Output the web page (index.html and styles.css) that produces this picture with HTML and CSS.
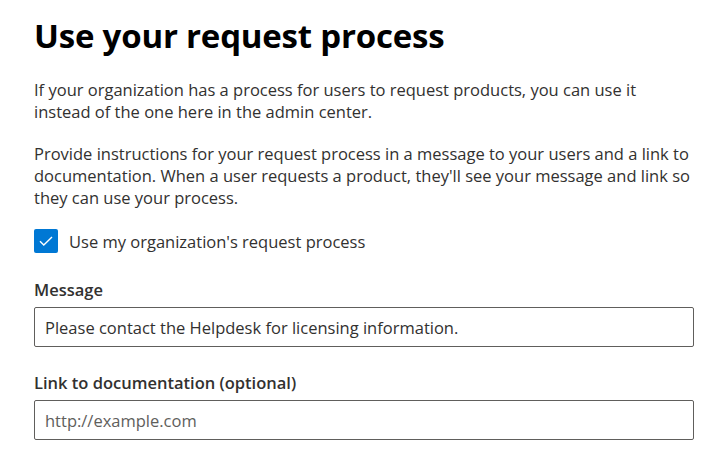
FILE: index.html
```html
<!DOCTYPE html>
<html lang="en">
<head>
  <meta charset="UTF-8" />
  <title>Use your request process</title>
  <link rel="stylesheet" href="styles.css">
</head>
<body>

<div class="panel">
  <h1>Use your request process</h1>
  <p class="desc">If your organization has a process for users to request products, you can use it instead of the one here in the admin center.</p>
  <p class="desc">Provide instructions for your request process in a message to your users and a link to documentation. When a user requests a product, they'll see your message and link so they can use your process.</p>

  <label class="check">
    <span class="box">
      <svg width="14" height="10" viewBox="0 0 14 10"><path d="M1 5.2 L4.8 9 L13 1" fill="none" stroke="#fff" stroke-width="1.4"/></svg>
    </span>
    <span>Use my organization's request process</span>
  </label>

  <div class="field">
    <label for="message">Message</label>
    <input type="text" id="message" value="Please contact the Helpdesk for licensing information." />
  </div>
  <div class="field">
    <label for="docLink">Link to documentation (optional)</label>
    <input type="text" id="docLink" placeholder="http://example.com" />
  </div>
</div>

</body>
</html>
```

FILE: styles.css
```css
body {
  margin: 0;
  font-family: "Open Sans", "Noto Sans", Arial, sans-serif;
  color: #323130;
  background: #fff;
}
.panel {
  width: 660px;
  padding: 13px 0 0 34px;
}
h1 {
  margin: 0 0 21px 0;
  font-size: 33px;
  font-weight: 700;
  color: #000;
  letter-spacing: -0.2px;
}
.desc {
  margin: 0 0 20px 0;
  font-size: 16.5px;
  line-height: 22px;
}
.check {
  display: flex;
  align-items: center;
  gap: 11px;
  font-size: 16.5px;
  margin: 0 0 25px 0;
}
.box {
  width: 24px;
  height: 24px;
  border-radius: 2px;
  background: #0078d4;
  display: flex;
  align-items: center;
  justify-content: center;
}
.field {
  margin-bottom: 24px;
}
.field label {
  display: block;
  font-size: 16.5px;
  font-weight: 600;
  margin-bottom: 6px;
}
.field input {
  box-sizing: border-box;
  width: 660px;
  height: 40px;
  padding: 0 10px;
  border: 1px solid #605e5c;
  border-radius: 2px;
  font-family: inherit;
  font-size: 16.5px;
  color: #323130;
}
.field input::placeholder {
  color: #605e5c;
}
```
